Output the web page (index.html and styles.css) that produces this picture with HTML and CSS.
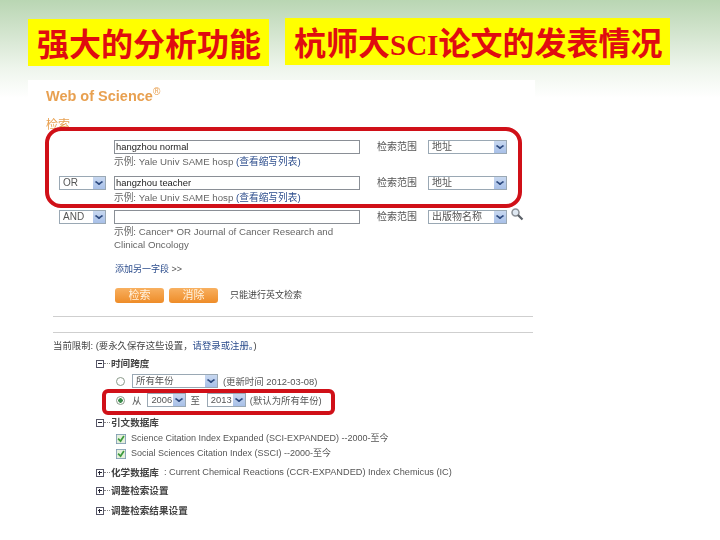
FILE: index.html
```html
<!DOCTYPE html>
<html lang="zh-CN">
<head>
    <meta charset="UTF-8">
    <title>强大的分析功能</title>
    <link rel="stylesheet" href="styles.css">
</head>
<body>
    <div class="titles">
        <div class="title title-left">强大的分析功能</div>
        <div class="title title-right">杭师大<span class="latin">SCI</span>论文的发表情况</div>
    </div>

    <div class="panel">
        <div class="logo">Web of Science<sup>®</sup></div>
        <div class="search-head">检索</div>

        <div class="search-form">
            <div class="row row-one">
                <div></div>
                <div>
                    <div class="input">hangzhou normal</div>
                    <div class="hint">示例: Yale Univ SAME hosp <a>(查看缩写列表)</a></div>
                </div>
                <div class="range-label">检索范围</div>
                <div class="select"><span>地址</span><i class="arrow"></i></div>
            </div>
            <div class="row row-two">
                <div class="select"><span>OR</span><i class="arrow"></i></div>
                <div>
                    <div class="input">hangzhou teacher</div>
                    <div class="hint">示例: Yale Univ SAME hosp <a>(查看缩写列表)</a></div>
                </div>
                <div class="range-label">检索范围</div>
                <div class="select"><span>地址</span><i class="arrow"></i></div>
            </div>
            <div class="row">
                <div class="select"><span>AND</span><i class="arrow"></i></div>
                <div>
                    <div class="input"></div>
                    <div class="hint">示例: Cancer* OR Journal of Cancer Research and Clinical Oncology</div>
                </div>
                <div class="range-label">检索范围</div>
                <div class="select"><span>出版物名称</span><i class="arrow"></i></div>
                <svg class="lens" width="14" height="14" viewBox="0 0 14 14">
                    <circle cx="5.5" cy="5.5" r="3.5" fill="#dfe8f2" stroke="#8a8f96" stroke-width="1.5"/>
                    <path d="M8 8l4.5 4.5" stroke="#5b6068" stroke-width="2.2"/>
                </svg>
            </div>
        </div>

        <div class="add-field"><a>添加另一字段</a> &gt;&gt;</div>

        <div class="actions">
            <div class="btn">检索</div>
            <div class="btn">消除</div>
            <span class="note">只能进行英文检索</span>
        </div>

        <div class="rule rule-first"></div>
        <div class="rule rule-second"></div>

        <div class="limits">当前限制: (要永久保存这些设置，<a>请登录或注册。</a>)</div>

        <div class="tree">
            <div class="node">
                <i class="toggle minus"></i><span class="dots"></span><b>时间跨度</b>
            </div>
            <div class="line line-all">
                <i class="radio"></i>
                <div class="select select-all"><span>所有年份</span><i class="arrow"></i></div>
                <span>(更新时间 2012-03-08)</span>
            </div>
            <div class="line line-years">
                <i class="radio on"></i>
                <span>从</span>
                <div class="select select-year year-from"><span>2006</span><i class="arrow"></i></div>
                <span>至</span>
                <div class="select select-year year-to"><span>2013</span><i class="arrow"></i></div>
                <span>(默认为所有年份)</span>
            </div>
            <div class="node node-db">
                <i class="toggle minus"></i><span class="dots"></span><b>引文数据库</b>
            </div>
            <div class="line line-check">
                <svg class="check" width="10" height="10" viewBox="0 0 12 12"><rect x=".5" y=".5" width="11" height="11" fill="#e4f0dc" stroke="#7d9ab0"/><path d="M2.5 5.5l3 3 4-6" fill="none" stroke="#3c9a3c" stroke-width="2"/></svg>
                <span>Science Citation Index Expanded (SCI-EXPANDED) --2000-至今</span>
            </div>
            <div class="line line-check">
                <svg class="check" width="10" height="10" viewBox="0 0 12 12"><rect x=".5" y=".5" width="11" height="11" fill="#e4f0dc" stroke="#7d9ab0"/><path d="M2.5 5.5l3 3 4-6" fill="none" stroke="#3c9a3c" stroke-width="2"/></svg>
                <span>Social Sciences Citation Index (SSCI) --2000-至今</span>
            </div>
            <div class="node node-chem">
                <i class="toggle plus"></i><span class="dots"></span><b>化学数据库</b><span class="chem-text">: Current Chemical Reactions (CCR-EXPANDED) Index Chemicus (IC)</span>
            </div>
            <div class="node node-set">
                <i class="toggle plus"></i><span class="dots"></span><b>调整检索设置</b>
            </div>
            <div class="node node-set">
                <i class="toggle plus"></i><span class="dots"></span><b>调整检索结果设置</b>
            </div>
        </div>

        <div class="mark mark-fields"></div>
        <div class="mark mark-years"></div>
    </div>
</body>
</html>
```

FILE: styles.css
```css
html, body {
    height: 100%;
    margin: 0;
    padding: 0;
    overflow: hidden;
}

body {
    font-family: "Liberation Sans", "Noto Sans CJK SC", sans-serif;
    background: linear-gradient(#b9d6b3 0, #cfe2ca 28px, #eef5ec 68px, #fff 98px);
}

.titles {
    display: flex;
    gap: 16px;
    padding: 18px 0 0 28px;
    height: 48px;
}

.title {
    background-color: #ffff00;
    color: #e00c10;
    font-family: "Noto Sans CJK SC", sans-serif;
    font-size: 32px;
    font-weight: bold;
    line-height: 47px;
    height: 47px;
    white-space: nowrap;
}

.title-left {
    width: 241px;
    margin-top: 1px;
    padding-left: 9px;
    box-sizing: border-box;
}

.title-right {
    width: 385px;
    padding-left: 9px;
    box-sizing: border-box;
}

.latin {
    font-family: "Liberation Serif", serif;
    font-size: 29px;
}

.panel {
    position: relative;
    margin: 14px 0 0 28px;
    width: 507px;
    height: 450px;
    background-color: #fff;
    font-size: 10px;
    line-height: 13px;
    color: #555;
    filter: blur(0.35px);
}

a {
    color: #2b4c8c;
}

.logo {
    padding: 8px 0 0 18px;
    font-size: 14.5px;
    line-height: 17px;
    font-weight: bold;
    color: #e8a050;
}

.logo sup {
    font-size: 10px;
    line-height: 0;
    font-weight: normal;
}

.search-head {
    margin: 13px 0 0 18px;
    font-size: 12px;
    line-height: 14px;
    color: #e8a050;
}

.search-form {
    margin: 8px 0 0 31px;
}

.row {
    display: grid;
    grid-template-columns: 47px 246px 52px 79px 16px;
    column-gap: 8px;
    align-items: start;
    height: 34px;
}

.row-one {
    height: 36px;
}

.input {
    height: 12px;
    border: 1px solid #8a8f96;
    padding-left: 1px;
    font-size: 9.4px;
    line-height: 12px;
    color: #222;
}

.hint {
    margin-top: 1px;
    font-size: 9.7px;
    color: #666;
}

.range-label {
    margin-left: 9px;
    line-height: 14px;
    white-space: nowrap;
}

.select {
    display: flex;
    justify-content: space-between;
    box-sizing: border-box;
    height: 14px;
    border: 1px solid #9aa8b4;
    padding-left: 3px;
    line-height: 12px;
    color: #555;
    white-space: nowrap;
}

.arrow {
    position: relative;
    width: 12px;
    background: linear-gradient(#c8d8f0, #a8c0e8);
}

.arrow::after {
    content: "";
    position: absolute;
    left: 3px;
    top: 2px;
    width: 4px;
    height: 4px;
    border-right: 2px solid #2d4a80;
    border-bottom: 2px solid #2d4a80;
    transform: scaleY(0.7) rotate(45deg);
}

.lens {
    margin: -3px 0 0 -5px;
}

.add-field {
    margin: 19px 0 0 87px;
    font-size: 9px;
}

.actions {
    display: flex;
    align-items: center;
    gap: 5px;
    margin: 12px 0 0 87px;
}

.btn {
    width: 49px;
    height: 15px;
    border-radius: 3px;
    background: linear-gradient(#f8b060, #ee8c28);
    color: #fff3e0;
    font-size: 11px;
    line-height: 15px;
    text-align: center;
}

.note {
    margin-left: 7px;
    font-size: 9px;
    color: #444;
}

.rule {
    height: 1px;
    margin-left: 25px;
    width: 480px;
    background-color: #cfcfcf;
}

.rule-first {
    margin-top: 13px;
}

.rule-second {
    margin-top: 15px;
}

.limits {
    margin: 6px 0 0 25px;
    font-size: 9.4px;
    color: #444;
}

.tree {
    margin: 5px 0 0 68px;
    color: #555;
}

.node {
    display: flex;
    align-items: center;
    height: 13px;
    font-size: 9.6px;
}

.node b {
    color: #444;
}

.toggle {
    position: relative;
    box-sizing: border-box;
    width: 8px;
    height: 8px;
    border: 1px solid #556;
}

.toggle::after {
    content: "";
    position: absolute;
    left: 1px;
    top: 2px;
    width: 4px;
    height: 1px;
    background-color: #223;
}

.plus::before {
    content: "";
    position: absolute;
    left: 2px;
    top: 1px;
    width: 1px;
    height: 4px;
    background-color: #223;
}

.dots {
    width: 6px;
    margin: 0 1px 0 0;
    border-top: 1px dotted #888;
}

.line {
    display: flex;
    align-items: center;
    gap: 4px;
    font-size: 9.4px;
    white-space: nowrap;
}

.line-all {
    height: 14px;
    margin: 4px 0 0 20px;
}

.line-years {
    height: 14px;
    margin: 5px 0 0 20px;
}

.radio {
    box-sizing: border-box;
    width: 9px;
    height: 9px;
    margin-right: 3px;
    border: 1px solid #8a9a8a;
    border-radius: 50%;
    background-color: #fff;
}

.radio.on {
    background: radial-gradient(circle, #3a8a4a 0, #3a8a4a 2px, #fff 2.5px);
}

.select-all {
    width: 86px;
    margin-right: 1px;
}

.select-year {
    width: 39px;
}

.year-from {
    margin-left: 2px;
}

.year-to {
    margin-left: 3px;
}

.node-db {
    margin-top: 9px;
}

.line-check {
    margin: 0 0 0 20px;
    height: 15px;
    font-size: 9px;
}

.check {
    margin-right: 1px;
}

.node-db + .line-check {
    margin-top: 2px;
}

.node-chem {
    margin-top: 5px;
    white-space: nowrap;
}

.chem-text {
    margin-left: 5px;
    font-size: 9.2px;
}

.node-set {
    margin-top: 5px;
}

.node-set:last-child {
    margin-top: 7px;
}

.mark {
    position: absolute;
    box-sizing: border-box;
    border: 4px solid #d01018;
}

.mark-fields {
    left: 17px;
    top: 47px;
    width: 477px;
    height: 81px;
    border-radius: 16px;
}

.mark-years {
    left: 74px;
    top: 309px;
    width: 233px;
    height: 26px;
    border-radius: 6px;
}
```
